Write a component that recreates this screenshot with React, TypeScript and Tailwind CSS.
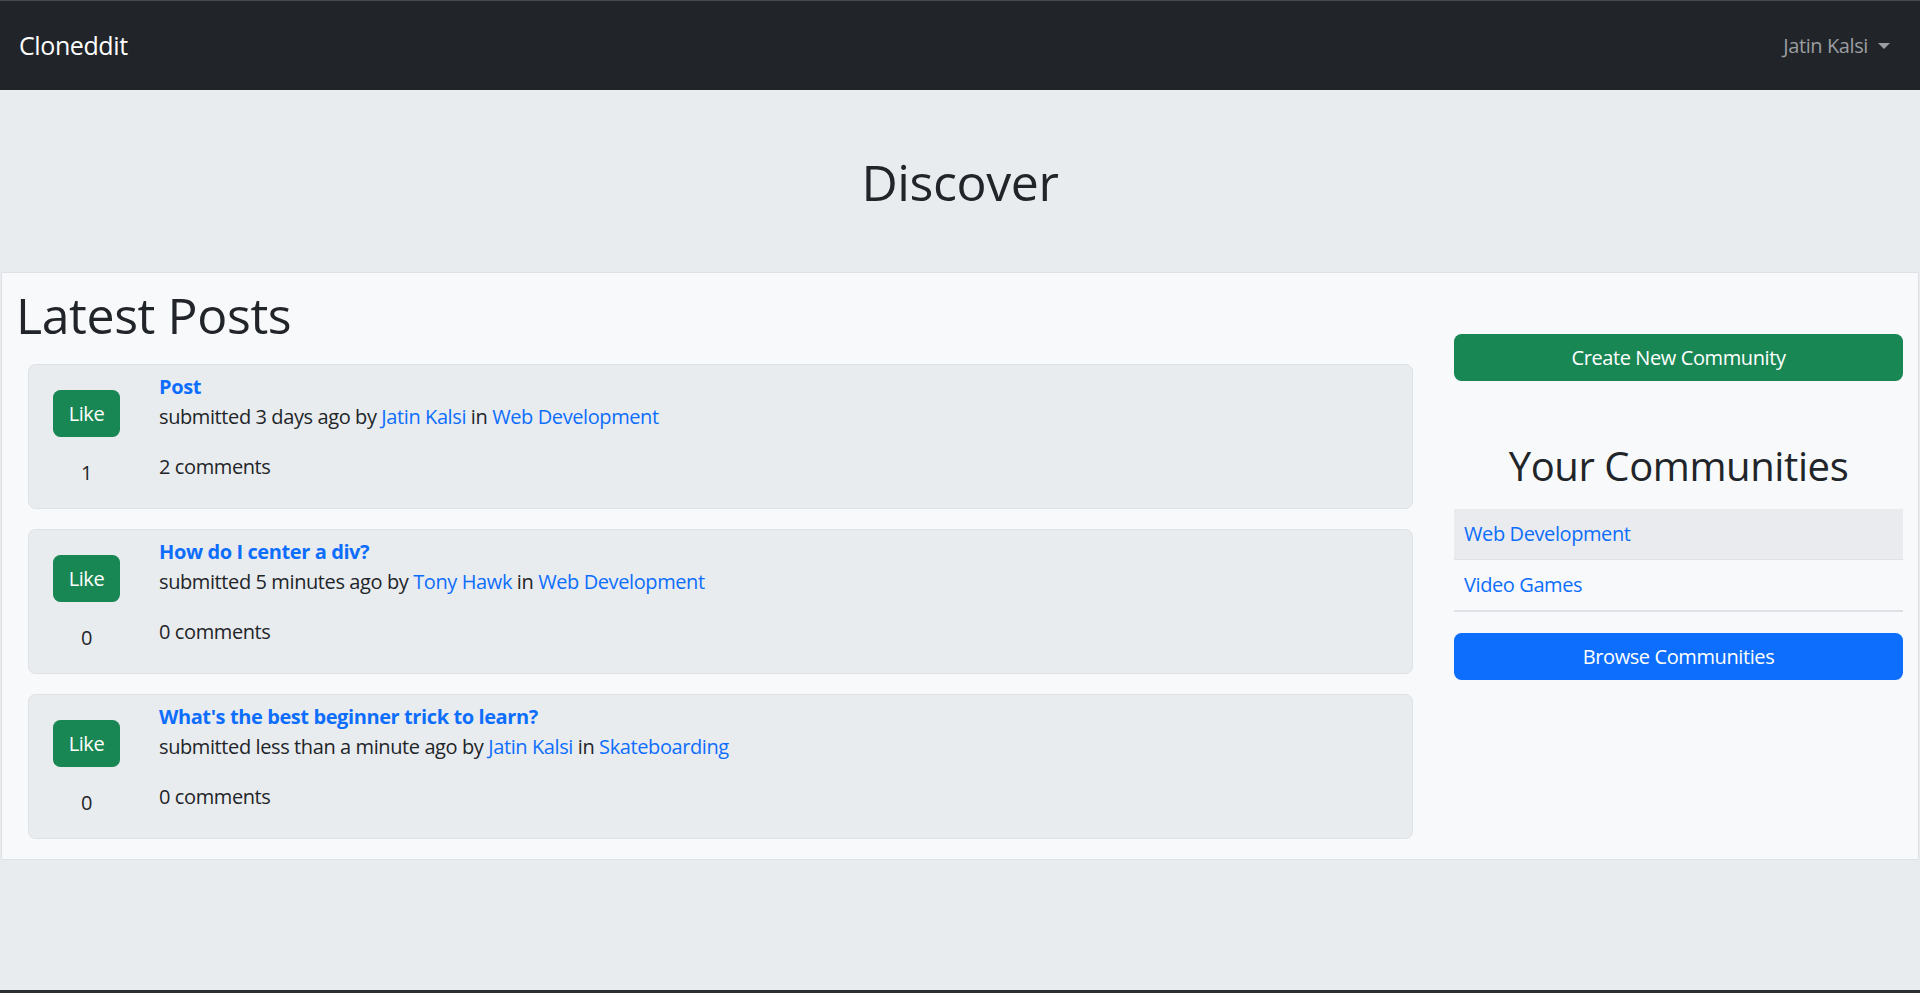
import React from "react";

const posts = [
  {
    title: "Post",
    age: "3 days ago",
    author: "Jatin Kalsi",
    community: "Web Development",
    comments: 2,
    likes: 1,
  },
  {
    title: "How do I center a div?",
    age: "5 minutes ago",
    author: "Tony Hawk",
    community: "Web Development",
    comments: 0,
    likes: 0,
  },
  {
    title: "What's the best beginner trick to learn?",
    age: "less than a minute ago",
    author: "Jatin Kalsi",
    community: "Skateboarding",
    comments: 0,
    likes: 0,
  },
];

function PostCard({ post }: any) {
  return (
    <div className="flex ml-[12px] mb-[20px] last:mb-0 bg-[#e9ecef] border border-[#dee2e6] rounded-[7.5px] pt-[7px] pb-[20px]">
      <div className="w-[115px] shrink-0 flex flex-col items-center pt-[18px]">
        <button className="w-[67px] h-[47px] flex items-center justify-center bg-[#198754] text-white rounded-[7.5px]">
          Like
        </button>
        <div className="mt-[21px] leading-[30px]">{post.likes}</div>
      </div>
      <div className="pl-[15px] flex flex-col">
        <a href="#" className="font-bold text-[#0d6efd] leading-[30px]">
          {post.title}
        </a>
        <p className="leading-[30px]">
          submitted {post.age} by{" "}
          <a href="#" className="text-[#0d6efd]">
            {post.author}
          </a>{" "}
          in{" "}
          <a href="#" className="text-[#0d6efd]">
            {post.community}
          </a>
        </p>
        <p className="mt-[20px] leading-[30px]">{post.comments} comments</p>
      </div>
    </div>
  );
}

export default function App() {
  return (
    <div className="min-h-[993px] flex flex-col bg-[#e9ecef] text-[#212529] text-[20px] leading-[1.5] font-['Open_Sans','Noto_Sans',sans-serif] tracking-[-0.02em]">
      <nav className="h-[90px] shrink-0 bg-[#212529] border-t border-[#4a4a4a] flex items-center justify-between pl-[19px] pr-[30px]">
        <a href="#" className="text-white text-[25px]">
          Cloneddit
        </a>
        <button className="flex items-center text-[#9a9da1]">
          Jatin Kalsi
          <span className="ml-[10px] w-0 h-0 border-t-[6px] border-t-[#9a9da1] border-x-[6px] border-x-transparent" />
        </button>
      </nav>

      <h1 className="text-center text-[50px] leading-[1.2] font-medium pt-[62px] pb-[60px]">
        Discover
      </h1>

      <div className="mx-[1px] border border-[#dee2e6] bg-[#f8f9fa] flex pl-[14px] pr-[15px] pb-[20px]">
        <div className="flex-1 flex flex-col">
          <h1 className="text-[50px] leading-[1.2] font-medium pt-[12px] mb-[19px]">
            Latest Posts
          </h1>
          {posts.map((p) => (
            <PostCard key={p.title} post={p} />
          ))}
        </div>

        <div className="w-[449px] shrink-0 ml-[41px] flex flex-col pt-[61px]">
          <button className="h-[47px] bg-[#198754] text-white rounded-[7.5px]">
            Create New Community
          </button>
          <h2 className="text-center text-[40px] leading-[1.2] font-medium mt-[61px] mb-[19px]">
            Your Communities
          </h2>
          <div className="flex flex-col">
            <a href="#" className="px-[10px] py-[10px] leading-[30px] bg-[#eaebee] border-b border-[#dee2e6] text-[#0d6efd]">
              Web Development
            </a>
            <a href="#" className="px-[10px] py-[10px] leading-[30px] border-b-2 border-[#dee2e6] text-[#0d6efd]">
              Video Games
            </a>
          </div>
          <button className="mt-[21px] h-[47px] bg-[#0d6efd] text-white rounded-[7.5px]">
            Browse Communities
          </button>
        </div>
      </div>

      <div className="flex-1" />
      <div className="h-[3px] bg-[#2b2d30]" />
    </div>
  );
}
